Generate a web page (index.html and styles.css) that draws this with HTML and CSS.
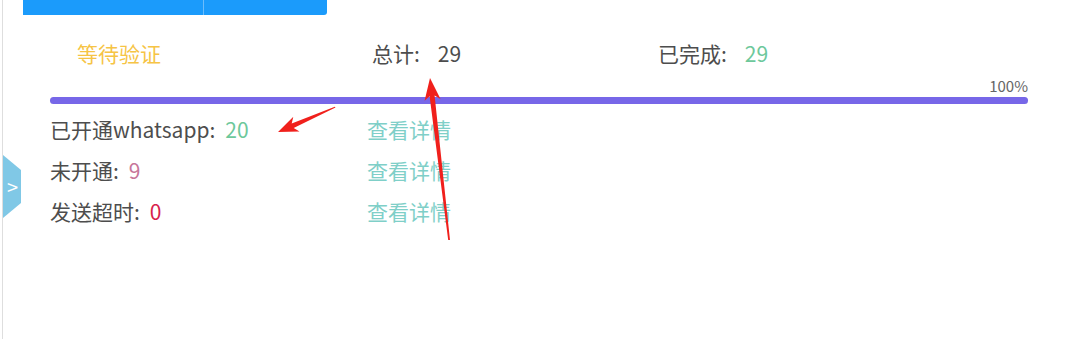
FILE: index.html
```html
<!DOCTYPE html>
<html lang="zh-CN">
<head>
    <meta charset="UTF-8">
    <meta name="viewport" content="width=device-width, initial-scale=1.0">
    <title>验证结果</title>
    <link rel="stylesheet" href="styles.css">
</head>
<body>
<div class="page">
    <div class="tabs">
        <div class="tab tab-first"></div>
        <div class="tab tab-last"></div>
    </div>

    <div class="panel">
        <div class="summary">
            <div class="status">等待验证</div>
            <div class="stat">总计:<span class="num">29</span></div>
            <div class="stat">已完成:<span class="num num-ok">29</span></div>
        </div>

        <div class="progress">
            <div class="progress-text">100%</div>
            <div class="progress-track">
                <div class="progress-bar" style="width: 100%"></div>
            </div>
        </div>

        <div class="result-list">
            <div class="result-row">
                <div class="result-label">已开通whatsapp:<span class="num num-ok">20</span></div>
                <a class="detail-link" href="#">查看详情</a>
            </div>
            <div class="result-row">
                <div class="result-label">未开通:<span class="num num-no">9</span></div>
                <a class="detail-link" href="#">查看详情</a>
            </div>
            <div class="result-row">
                <div class="result-label">发送超时:<span class="num num-timeout">0</span></div>
                <a class="detail-link" href="#">查看详情</a>
            </div>
        </div>
    </div>

    <div class="side-toggle">&gt;</div>

    <!-- annotation arrows drawn over the screenshot -->
    <svg class="marks" width="1080" height="339" viewBox="0 0 1080 339">
        <polygon fill="#f0201c" points="335.5,107.5 293.7,128.1 299.5,131.6 278,132 293.3,116.8 291.7,123.5 334.8,106.8"/>
        <polygon fill="#f0201c" points="450,240 434.6,95.6 440.5,98.9 430,78 424.6,100.8 429.6,96.2 448.2,240"/>
    </svg>
</div>
</body>
</html>
```

FILE: styles.css
```css
body {
    margin: 0;
    background-color: #fff;
    font-family: "Noto Sans CJK SC", "Noto Sans", sans-serif;
    color: #4d4d4d;
}

.page {
    position: relative;
    width: 1077px;
    height: 339px;
    margin-left: 2px;
    border-left: 1px solid #dedede;
    overflow: hidden;
}

.tabs {
    display: flex;
    margin-left: 20px;
    height: 15px;
}

.tab {
    background-color: #1b9bfb;
}

.tab-first {
    width: 180px;
}

.tab-last {
    width: 123px;
    border-left: 1px solid #6cbcfb;
    border-bottom-right-radius: 3px;
}

.panel {
    padding: 0 52px 0 47px;
}

.summary {
    display: grid;
    grid-template-columns: 322px 286px 1fr;
    height: 48px;
    margin-top: 14px;
    align-items: center;
    font-size: 21px;
}

.status {
    padding-left: 27px;
    color: #f6c445;
}

.num {
    margin-left: 18px;
}

.num-ok {
    color: #6dc89b;
}

.num-no {
    color: #c7769a;
}

.num-timeout {
    color: #d81f4c;
}

.progress-text {
    text-align: right;
    font-size: 15px;
    color: #666;
    line-height: 18px;
}

.progress-track {
    height: 7px;
    margin-top: 2px;
    border-radius: 4px;
    background-color: #ebebeb;
}

.progress-bar {
    height: 100%;
    border-radius: 4px;
    background-color: #7767e8;
}

.result-list {
    margin-top: 4px;
}

.result-row {
    display: flex;
    align-items: center;
    height: 41px;
    font-size: 21px;
}

.result-label {
    width: 317px;
}

.result-label .num {
    margin-left: 10px;
}

.detail-link {
    color: #7fcfc8;
    text-decoration: none;
}

.side-toggle {
    position: absolute;
    left: 0;
    top: 155px;
    width: 18px;
    height: 63px;
    background-color: #80c8e6;
    clip-path: polygon(0 0, 100% 24%, 100% 76%, 0 100%);
    color: #fff;
    font-size: 20px;
    line-height: 63px;
    padding-left: 4px;
    box-sizing: border-box;
}

.marks {
    position: absolute;
    left: -3px;
    top: 0;
    pointer-events: none;
}
```
